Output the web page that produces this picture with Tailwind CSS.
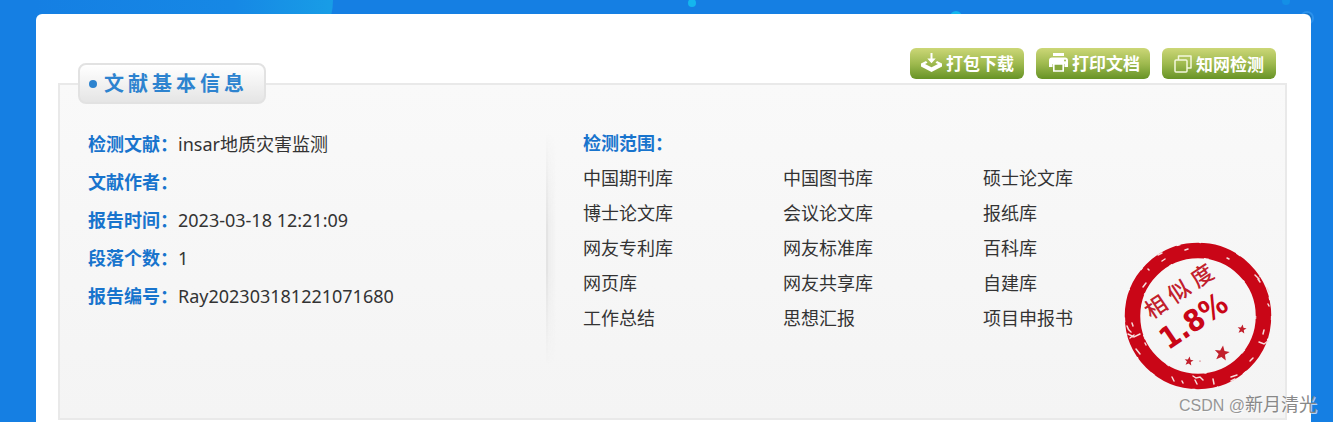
<!DOCTYPE html>
<html lang="zh-CN">
<head>
<meta charset="utf-8">
<meta name="viewport" content="width=device-width, initial-scale=1">
<title>文献基本信息</title>
<script src="https://cdn.jsdelivr.net/npm/@tailwindcss/browser@4"></script>
</head>
<body class="relative flex min-h-screen flex-col overflow-x-hidden bg-[#157fe3] pt-3.5 pr-[22px] pl-9 font-['Noto_Sans','Noto_Sans_CJK_SC',sans-serif] text-lg text-[#333]">
  <!-- background decoration -->
  <svg class="absolute top-0 left-0" width="1333" height="40" viewBox="0 0 1333 40" aria-hidden="true">
    <defs>
      <linearGradient id="arc" x1="0" x2="1"><stop offset="0.1" stop-color="#157fe3"/><stop offset="0.7" stop-color="#1688e5"/><stop offset="1" stop-color="#189de6"/></linearGradient>
    </defs>
    <path d="M0 0H333Q333 8 331 16H0Z" fill="url(#arc)"/>
    <circle cx="692" cy="3" r="4" fill="#14b6ee"/>
    <circle cx="956" cy="17" r="6" fill="#14b6ee"/>
    <circle cx="1286" cy="1" r="4" fill="#148fe6"/>
    <circle cx="1307" cy="18" r="6" fill="#1676cc" stroke="#2b91ec" stroke-width="2"/>
  </svg>

  <main class="relative flex-1 rounded-t-md bg-white pt-[34px] pr-6 pb-0.5 pl-[22px]">
    <div class="mb-1 flex justify-end gap-3 pr-[11px] font-['Noto_Sans_CJK_SC',sans-serif] text-[17px] leading-5 font-bold text-white">
      <button type="button" class="flex h-[31px] w-[114px] items-center justify-end gap-1 rounded-md bg-linear-to-b from-[#ccd777] via-[#9fba4f] to-[#679325] pr-2.5 pb-0.5 whitespace-nowrap">
        <svg class="shrink-0" width="21" height="19" viewBox="0 0 21 19" fill="#fff" aria-hidden="true"><path d="M9.500 0h2v5.500h3.200l-4.200 4.800-4.200-4.800h3.200z"/><path d="M5 8 0 10.500V13.500L10.500 19 21 13.500V10.500L16 8 14.500 9.800 17 11 10.500 14.200 4 11 6.500 9.800Z"/></svg>
        打包下载
      </button>
      <button type="button" class="flex h-[31px] w-[114px] items-center justify-end gap-1 rounded-md bg-linear-to-b from-[#ccd777] via-[#9fba4f] to-[#679325] pr-2.5 pb-0.5 whitespace-nowrap">
        <svg class="shrink-0" width="19" height="19" viewBox="0 0 19 19" aria-hidden="true"><path d="M4 0h11v3H4Z" fill="#fff"/><path d="M3 4.500h13a3 3 0 0 1 3 3V14h-3.500v-3h-12v3H0V7.500a3 3 0 0 1 3-3Z" fill="#fff"/><path d="M4.800 11h9.400v7H4.800z" fill="#86a83d" stroke="#fff" stroke-width="1.600"/><circle cx="16" cy="7.500" r="1" fill="#9fba4f"/></svg>
        打印文档
      </button>
      <button type="button" class="flex h-[31px] w-[114px] items-center justify-end gap-1 rounded-md bg-linear-to-b from-[#ccd777] via-[#9fba4f] to-[#679325] pr-3 whitespace-nowrap">
        <svg class="shrink-0" width="18" height="18" viewBox="0 0 18 18" fill="none" stroke="#f3f7dd" stroke-width="1.500" stroke-linejoin="round" aria-hidden="true"><rect x="1" y="5" width="12" height="12" rx="1"/><path d="M4.500 5V1H17v12h-4"/></svg>
        知网检测
      </button>
    </div>

    <section class="relative flex border-2 border-[#e9e9e9] bg-linear-to-b from-[#f9f9f9] to-[#f4f4f4] pt-10 pr-3 pb-[27px] pl-7">
      <h2 class="absolute -top-[22px] left-[18px] flex h-[41px] w-[188px] items-center gap-[7px] rounded-lg border-2 border-[#e2e2e2] bg-linear-to-b from-white to-[#e5e5e5] pl-[9px] text-xl leading-6 font-bold tracking-[4px] whitespace-nowrap text-[#2d83cf]">
        <span class="size-2 shrink-0 rounded-full bg-[#2d83cf]"></span>文献基本信息
      </h2>

      <dl class="w-[458px] shrink-0 leading-[38px] whitespace-nowrap">
        <div class="flex"><dt class="font-bold text-[#1874cd]">检测文献：</dt><dd>insar地质灾害监测</dd></div>
        <div class="flex"><dt class="font-bold text-[#1874cd]">文献作者：</dt><dd></dd></div>
        <div class="flex"><dt class="font-bold text-[#1874cd]">报告时间：</dt><dd>2023-03-18 12:21:09</dd></div>
        <div class="flex"><dt class="font-bold text-[#1874cd]">段落个数：</dt><dd>1</dd></div>
        <div class="flex"><dt class="font-bold text-[#1874cd]">报告编号：</dt><dd>Ray202303181221071680</dd></div>
      </dl>

      <div class="mt-2 flex h-[232px] w-[37px] shrink-0 mask-y-from-60% mask-y-to-100%">
        <div class="w-0.5 bg-[#e4e4e4]"></div>
        <div class="w-2 bg-linear-to-r from-[#ececec] to-transparent"></div>
      </div>

      <div class="mt-px min-w-0 leading-[35px]">
        <h3 class="font-bold text-[#1874cd]">检测范围：</h3>
        <ul class="grid grid-cols-[200px_200px_auto] whitespace-nowrap">
          <li>中国期刊库</li><li>中国图书库</li><li>硕士论文库</li>
          <li>博士论文库</li><li>会议论文库</li><li>报纸库</li>
          <li>网友专利库</li><li>网友标准库</li><li>百科库</li>
          <li>网页库</li><li>网友共享库</li><li>自建库</li>
          <li>工作总结</li><li>思想汇报</li><li>项目申报书</li>
        </ul>
      </div>

      <!-- similarity stamp -->
      <svg class="mt-[116px] ml-auto shrink-0" width="150" height="150" viewBox="-75 -75 150 150" role="img" aria-label="相似度 1.8%">
        <circle r="65.500" fill="none" stroke="#c90617" stroke-width="15.500"/>
        <circle r="73.500" fill="none" stroke="#f6f6f6" stroke-width="1.200" stroke-dasharray="4 19 2 37 5 28 1 22 3 41"/>
        <circle r="57.800" fill="none" stroke="#f6f6f6" stroke-width="1" stroke-dasharray="3 33 5 41 2 37"/>
        <g stroke="#f6dcdc" stroke-width="1.500" stroke-linecap="round" fill="none">
          <path d="M-40-61l4-2M-36-55l3-2M-50-47l1 1M-55-29l3-4M57-41l4 4M60-37l2 3M69-28l2 4M70-12l1 2M29-58l2 1M-13-66l3-1"/>
          <path d="M-71 10q1 4 4 6M-70 18l6 3 6-3M-66 7l1 3M-68 22l4-3M-62 33l4 5M-53 27l1 2M-26 61l2 4M-16 65l1 2M-5 60l3 2 4-1 3 3M-3 64l2 4M15 63l1 5M33 61l6-2M33 65l4-2M61 26l5 2 4-3M66 14l-1 4M52 45l3-3"/>
        </g>
        <g fill="#c2202c">
          <path d="M0-7.500 2.200-2.300 7.500-2 3.200 1.400 4.800 7 0 4-4.800 7-3.200 1.400-7.500-2-2.200-2.300Z" transform="translate(24 37) rotate(8)"/>
          <path d="M0-7.500 2.200-2.300 7.500-2 3.200 1.400 4.800 7 0 4-4.800 7-3.200 1.400-7.500-2-2.200-2.300Z" transform="translate(44 13) rotate(8) scale(.6)"/>
          <path d="M0-7.500 2.200-2.300 7.500-2 3.200 1.400 4.800 7 0 4-4.800 7-3.200 1.400-7.500-2-2.200-2.300Z" transform="translate(-9 45) rotate(8) scale(.6)"/>
          <circle cx="2" cy="45" r=".6"/>
        </g>
        <g transform="rotate(-34)">
          <text x="-30 -2 26" y="-23" text-anchor="middle" font-size="22" class="fill-[#c2202c] font-['Noto_Sans_CJK_SC',sans-serif] font-medium">相似度</text>
          <text x="-44" y="12" font-size="30" class="fill-[#c90617] font-['DejaVu_Sans_Condensed','DejaVu_Sans',sans-serif] font-bold">1.8%</text>
        </g>
      </svg>
    </section>
  </main>

  <p class="absolute right-4 bottom-1 font-['Liberation_Sans','Noto_Sans_CJK_SC',sans-serif] text-base leading-6 whitespace-nowrap text-[#969696] text-shadow-[1px_1px_0_#ffffffaa]">CSDN @<span class="text-lg leading-6 text-[#888]">新月清光</span></p>
</body>
</html>
